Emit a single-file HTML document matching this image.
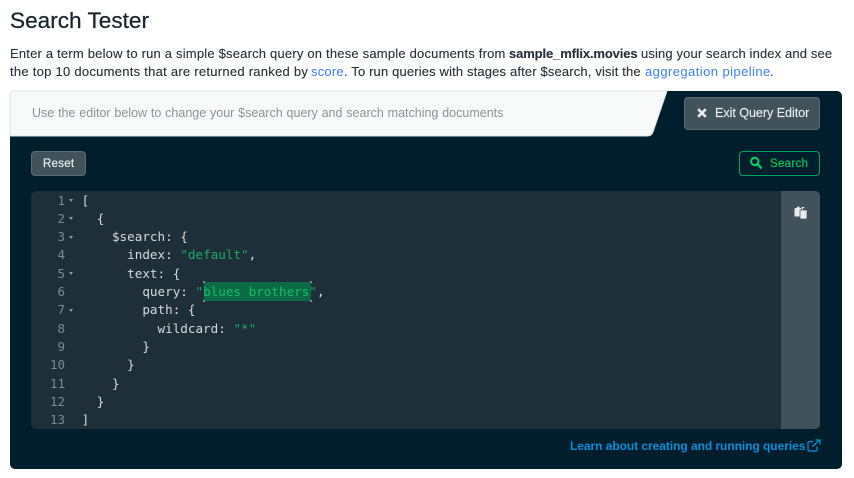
<!DOCTYPE html>
<html>
<head>
<meta charset="utf-8">
<style>
html,body{margin:0;padding:0;background:#fff;}
#p{position:relative;width:854px;height:478px;overflow:hidden;background:#fff;font-family:"Liberation Sans",sans-serif;filter:blur(0.35px);}
.t{position:absolute;white-space:pre;}
.q{font-size:13px;line-height:18px;color:#25313b;-webkit-text-stroke:.12px #25313b;}
.l{font-size:13px;line-height:18px;color:#3c7df0;}
.c{position:absolute;white-space:pre;font-family:"DejaVu Sans Mono",monospace;font-size:12.62px;line-height:18px;color:#d5dadb;left:81.6px;}
.n{position:absolute;font-family:"DejaVu Sans Mono",monospace;font-size:12.5px;line-height:18px;color:#7c8a90;width:34px;text-align:right;left:31px;}
.s{color:#1fa861;}
.h{color:#16bd6c;}
.a{position:absolute;left:69px;width:0;height:0;border-left:2.5px solid transparent;border-right:2.5px solid transparent;border-top:3px solid #8b979c;}
</style>
</head>
<body>
<div id="p">
  <div class="t" style="left:10px;top:6px;font-size:22.6px;line-height:30px;color:#17242e;-webkit-text-stroke:.25px #17242e;">Search Tester</div>

  <div class="t q" style="left:10px;top:45px;letter-spacing:.2px;">Enter a term below to run a simple $search query on these sample documents from</div>
  <div class="t q" style="left:509px;top:45px;font-weight:bold;letter-spacing:-.12px;">sample_mflix.movies</div>
  <div class="t q" style="left:641px;top:45px;letter-spacing:.13px;">using your search index and see</div>

  <div class="t q" style="left:10px;top:63px;letter-spacing:.265px;">the top 10 documents that are returned ranked by</div>
  <div class="t l" style="left:311px;top:63px;letter-spacing:.2px;">score</div>
  <div class="t q" style="left:344px;top:63px;letter-spacing:.15px;">. To run queries with stages after $search, visit the</div>
  <div class="t l" style="left:645px;top:63px;letter-spacing:.43px;">aggregation pipeline</div>
  <div class="t q" style="left:770px;top:63px;">.</div>

  <div style="position:absolute;left:10px;top:91px;width:832px;height:378px;background:#001e2b;border-radius:5px;"></div>
  <svg style="position:absolute;left:9px;top:90px;" width="662" height="47" viewBox="0 0 662 47">
    <path d="M1 46 V6 Q1 1 6 1 H658 L644 42 Q642.5 46 638.5 46 Z" fill="#f8f9f9" stroke="#e1e5e6" stroke-width="1"/>
  </svg>
  <div class="t" style="left:32px;top:104px;font-size:12.5px;line-height:18px;color:#89949a;word-spacing:.37px;">Use the editor below to change your $search query and search matching documents</div>

  <div style="position:absolute;left:684px;top:97px;width:134px;height:31px;background:#41525b;border:1px solid #5c6c75;border-radius:4px;"></div>
  <svg style="position:absolute;left:696px;top:107px;" width="12" height="12" viewBox="0 0 12 12"><path d="M2.2 2.2 L9.8 9.8 M9.8 2.2 L2.2 9.8" stroke="#e8edeb" stroke-width="2.6"/></svg>
  <div class="t" style="left:715px;top:104px;font-size:12.5px;line-height:18px;color:#e8edeb;letter-spacing:-.01px;-webkit-text-stroke:.15px #e8edeb;">Exit Query Editor</div>

  <div style="position:absolute;left:31px;top:151px;width:53px;height:23px;background:#41525b;border:1px solid #5c6c75;border-radius:4px;"></div>
  <div class="t" style="left:43px;top:155.5px;font-size:11.5px;line-height:16px;color:#e8edeb;letter-spacing:.25px;-webkit-text-stroke:.2px #e8edeb;">Reset</div>

  <div style="position:absolute;left:739px;top:151px;width:79px;height:23px;border:1px solid #00a35c;border-radius:4px;"></div>
  <svg style="position:absolute;left:749px;top:156px;" width="15" height="14" viewBox="0 0 15 14"><circle cx="5.8" cy="5.4" r="3.7" fill="none" stroke="#00d165" stroke-width="2"/><path d="M8.5 8 L12.6 12.4" stroke="#00d165" stroke-width="2.4"/></svg>
  <div class="t" style="left:770px;top:155.5px;font-size:11.5px;line-height:16px;color:#00c75f;letter-spacing:.3px;-webkit-text-stroke:.2px #00c75f;">Search</div>

  <div style="position:absolute;left:31px;top:191px;width:789px;height:238px;background:#1f2f39;border-radius:5px;overflow:hidden;">
    <div style="position:absolute;right:0;top:0;width:39px;height:238px;background:#41525b;"></div>
  </div>
  <svg style="position:absolute;left:793px;top:205px;" width="16" height="16" viewBox="0 0 16 16">
    <path d="M1.5 4 Q1.5 3 2.5 3 H4 V1.8 H6.5 V3 H8 V11.5 H2.5 Q1.5 11.5 1.5 10.5 Z" fill="#e8edeb"/>
    <path d="M7 5 H13 Q14 5 14 6 V13 Q14 14 13 14 H8 Q7 14 7 13 Z" fill="#e8edeb" stroke="#41525b" stroke-width=".7"/>
    <path d="M8.5 2 L11.5 2 L9 5 Z" fill="#e8edeb"/>
  </svg>

  <div class="n" style="top:192px;">1</div><div class="a" style="top:199px;"></div>
  <div class="n" style="top:210px;">2</div><div class="a" style="top:217px;"></div>
  <div class="n" style="top:228px;">3</div><div class="a" style="top:236px;"></div>
  <div class="n" style="top:246px;">4</div>
  <div class="n" style="top:265px;">5</div><div class="a" style="top:272px;"></div>
  <div class="n" style="top:283px;">6</div>
  <div class="n" style="top:301px;">7</div><div class="a" style="top:309px;"></div>
  <div class="n" style="top:320px;">8</div>
  <div class="n" style="top:338px;">9</div>
  <div class="n" style="top:356px;">10</div>
  <div class="n" style="top:375px;">11</div>
  <div class="n" style="top:393px;">12</div>
  <div class="n" style="top:411px;">13</div>

  <div style="position:absolute;left:204px;top:282px;width:107px;height:19px;background:#0c6a45;"></div>
  <div style="position:absolute;left:203px;top:281px;width:2px;height:2px;background:#7c8a90;"></div>
  <div style="position:absolute;left:310px;top:281px;width:2px;height:2px;background:#7c8a90;"></div>
  <div style="position:absolute;left:203px;top:300px;width:2px;height:2px;background:#7c8a90;"></div>
  <div style="position:absolute;left:310px;top:300px;width:2px;height:2px;background:#7c8a90;"></div>

  <div class="c" style="top:192px;">[</div>
  <div class="c" style="top:210px;">  {</div>
  <div class="c" style="top:228px;">    $search: {</div>
  <div class="c" style="top:246px;">      index: <span class="s">"default"</span>,</div>
  <div class="c" style="top:265px;">      text: {</div>
  <div class="c" style="top:283px;">        query: <span class="s">"</span><span class="h">blues brothers</span><span class="s">"</span>,</div>
  <div class="c" style="top:301px;">        path: {</div>
  <div class="c" style="top:320px;">          wildcard: <span class="s">"*"</span></div>
  <div class="c" style="top:338px;">        }</div>
  <div class="c" style="top:356px;">      }</div>
  <div class="c" style="top:375px;">    }</div>
  <div class="c" style="top:393px;">  }</div>
  <div class="c" style="top:411px;">]</div>

  <div class="t" style="left:570px;top:437px;font-size:12px;line-height:18px;color:#0a8fd8;font-weight:bold;letter-spacing:-.05px;">Learn about creating and running queries</div>
  <svg style="position:absolute;left:807px;top:439px;" width="14" height="13" viewBox="0 0 14 13">
    <path d="M6 2.5 H2.5 Q1 2.5 1 4 V10.5 Q1 12 2.5 12 H8.5 Q10 12 10 10.5 V7.5" fill="none" stroke="#0a8fd8" stroke-width="1.2"/>
    <path d="M5.5 7.5 L12 1.5 M8.5 1 H13 V5.5" fill="none" stroke="#0a8fd8" stroke-width="1.3"/>
  </svg>
</div>
</body>
</html>
